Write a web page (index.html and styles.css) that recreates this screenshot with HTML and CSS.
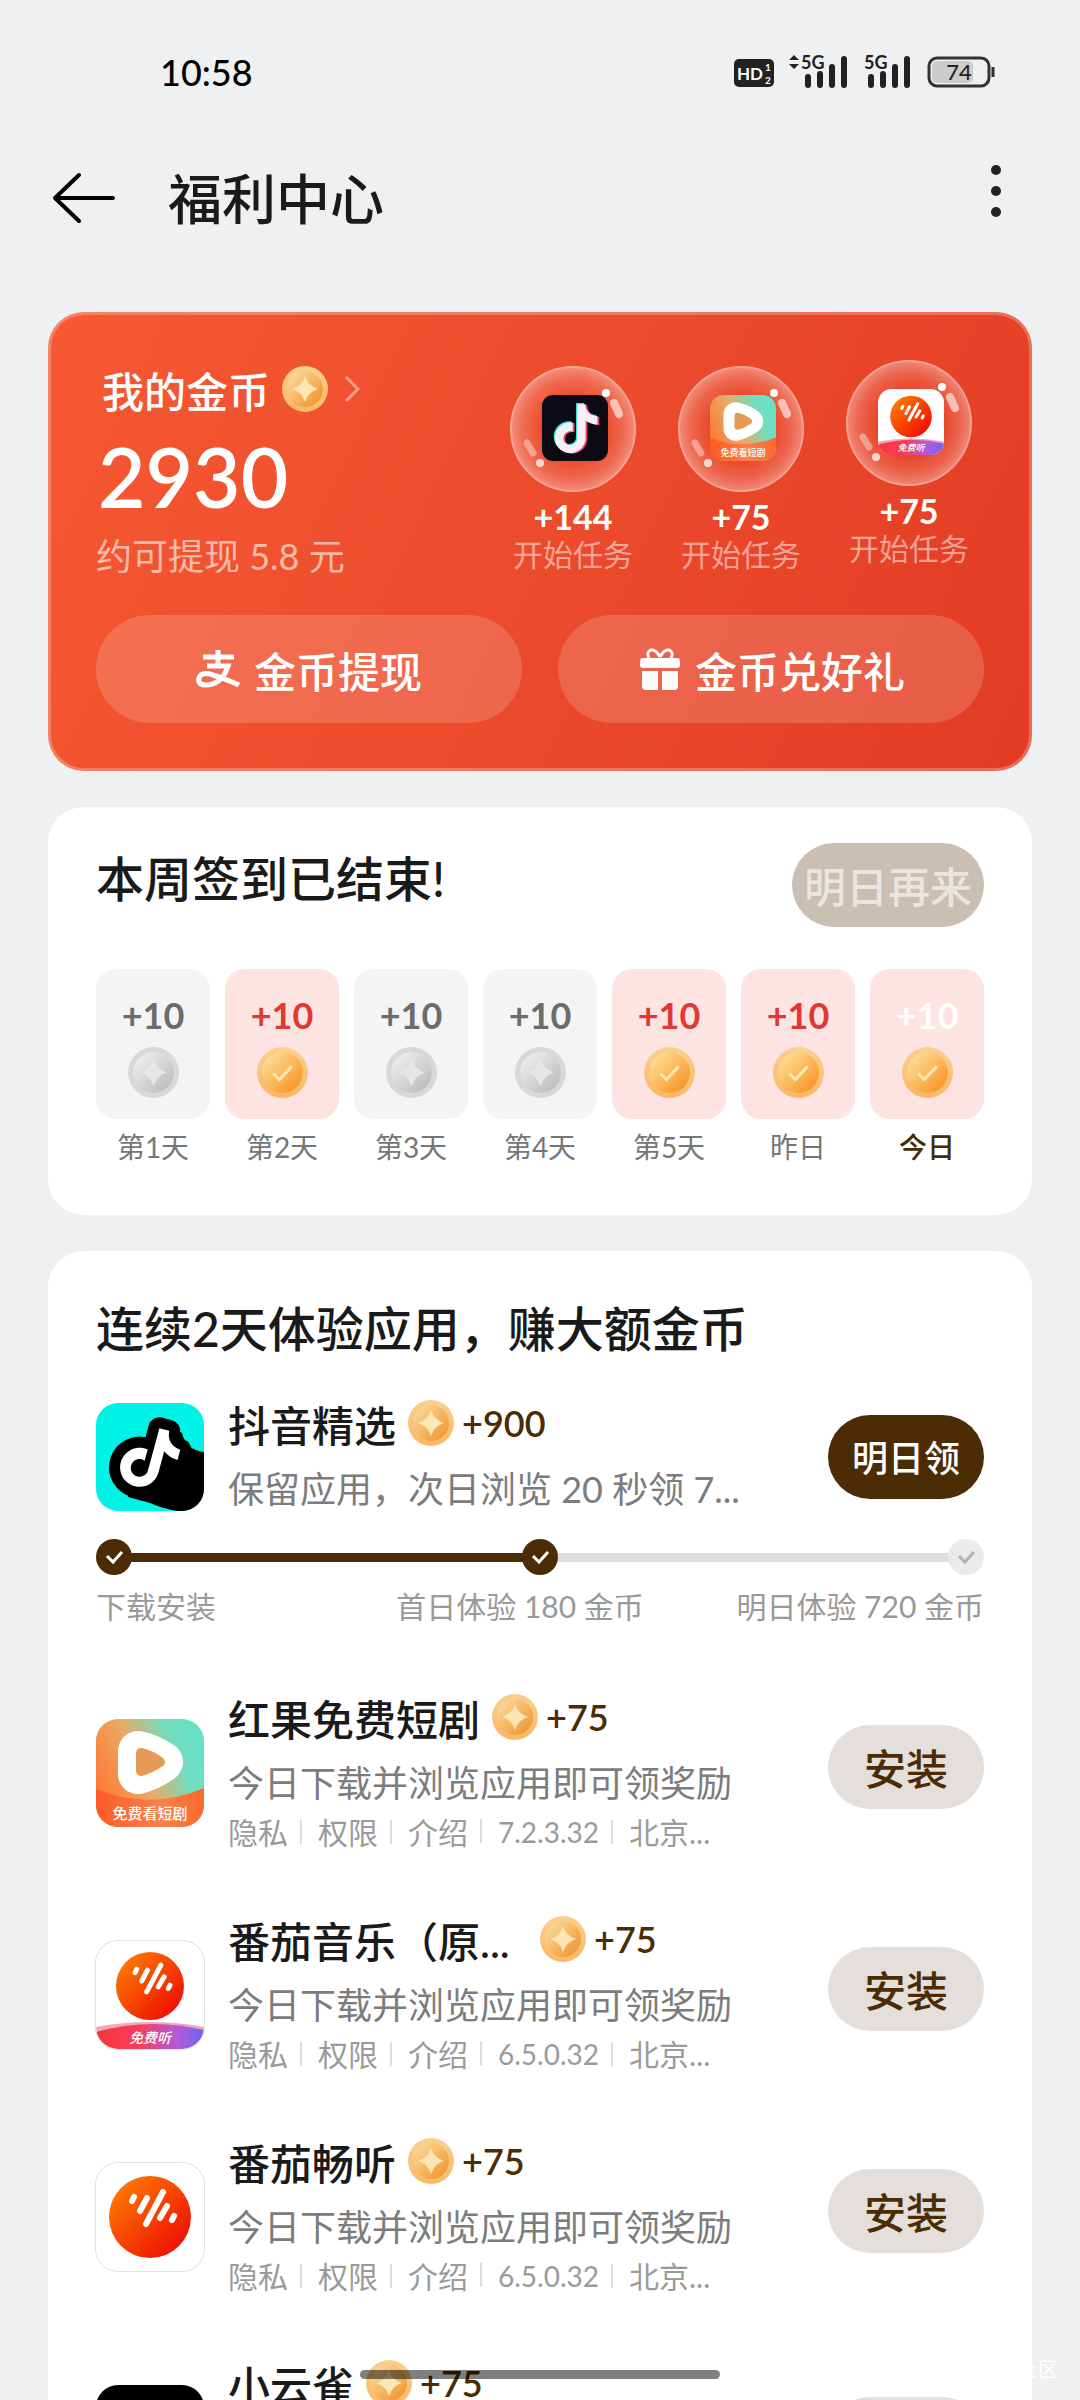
FILE: index.html
```html
<!DOCTYPE html>
<html lang="zh-CN">

<head>
  <meta charset="utf-8">
  <meta name="viewport" content="width=device-width, initial-scale=1.0" />
  <title>福利中心</title>
  <link rel="stylesheet" href="styles.css">
</head>

<body>
  <!-- shared icons -->
  <svg class="defs" width="0" height="0" aria-hidden="true">
    <defs>
      <linearGradient id="gold-rim" x1="0" y1="0" x2="0" y2="1">
        <stop offset="0" stop-color="#f9d08e" />
        <stop offset="1" stop-color="#fbb765" />
      </linearGradient>
      <linearGradient id="gold-face" x1="0" y1="0" x2="1" y2="1">
        <stop offset="0" stop-color="#fde0a6" />
        <stop offset="1" stop-color="#ee8e26" />
      </linearGradient>
      <linearGradient id="tick-face" x1="0" y1="0" x2="1" y2="1">
        <stop offset="0.1" stop-color="#ffdf98" />
        <stop offset="1" stop-color="#f68a17" />
      </linearGradient>
      <linearGradient id="silver-face" x1="0" y1="0" x2="1" y2="1">
        <stop offset="0.1" stop-color="#eeeff0" />
        <stop offset="1" stop-color="#b3b5b7" />
      </linearGradient>
      <linearGradient id="drama-bg" x1="0" y1="0.6" x2="0.9" y2="0.2">
        <stop offset="0" stop-color="#fd7a35" />
        <stop offset="0.45" stop-color="#e8ab68" />
        <stop offset="0.8" stop-color="#74dcbd" />
        <stop offset="1" stop-color="#68e0c6" />
      </linearGradient>
      <linearGradient id="drama-wave" x1="0" y1="0" x2="1" y2="0">
        <stop offset="0" stop-color="#fb5c25" />
        <stop offset="0.6" stop-color="#fb7f49" />
        <stop offset="1" stop-color="#fa6a2e" />
      </linearGradient>
      <linearGradient id="tomato" x1="0" y1="0" x2="1" y2="1">
        <stop offset="0.1" stop-color="#ff7a00" />
        <stop offset="0.9" stop-color="#ee0c04" />
      </linearGradient>
      <linearGradient id="tomato-wave" x1="0" y1="0" x2="1" y2="0">
        <stop offset="0" stop-color="#f8343c" />
        <stop offset="0.4" stop-color="#f2405e" />
        <stop offset="0.75" stop-color="#b45ad8" />
        <stop offset="1" stop-color="#6a66f4" />
      </linearGradient>
      <radialGradient id="bubble">
        <stop offset="0.5" stop-color="#fff" stop-opacity="0" />
        <stop offset="0.8" stop-color="#fff" stop-opacity="0.17" />
        <stop offset="0.98" stop-color="#fff" stop-opacity="0.36" />
        <stop offset="1" stop-color="#fff" stop-opacity="0.4" />
      </radialGradient>
      <clipPath id="app-clip">
        <rect width="108" height="108" rx="22" />
      </clipPath>
    </defs>

    <symbol id="coin" viewBox="0 0 46 46">
      <circle cx="23" cy="23" r="23" fill="url(#gold-rim)" />
      <circle cx="23" cy="23" r="18" fill="url(#gold-face)" />
      <path d="M23 10q3 10 13 13q-10 3-13 13q-3-10-13-13q10-3 13-13z" fill="#fee5b3" />
    </symbol>
    <symbol id="coin-silver" viewBox="0 0 50 50">
      <circle cx="25" cy="25" r="25" fill="#d6d8da" />
      <circle cx="25" cy="25" r="20" fill="url(#silver-face)" />
      <path d="M25 11q3 11 13 14q-10 3-13 14q-3-11-13-14q10-3 13-14z" fill="#e5e6e7" />
    </symbol>
    <symbol id="coin-tick" viewBox="0 0 50 50">
      <circle cx="25" cy="25" r="25" fill="url(#gold-rim)" />
      <circle cx="25" cy="25" r="20" fill="url(#tick-face)" />
      <path d="M16 26l6 6l12-13" fill="none" stroke="#ffe7b5" stroke-width="3" />
    </symbol>
    <symbol id="tick" viewBox="0 0 36 36">
      <path d="M11 17l6 6l9-10" fill="none" stroke="currentColor" stroke-width="3" />
    </symbol>
    <symbol id="note" class="note" viewBox="0 0 24 24">
      <path d="M12.525.02c1.31-.02 2.61-.01 3.91-.02.08 1.53.63 3.09 1.75 4.17 1.12 1.11 2.7 1.62 4.24 1.79v4.03c-1.44-.05-2.89-.35-4.2-.97-.57-.26-1.1-.59-1.62-.93-.01 2.92.01 5.84-.02 8.75-.08 1.4-.54 2.79-1.35 3.94-1.31 1.92-3.58 3.17-5.91 3.21-1.43.08-2.86-.31-4.08-1.03-2.02-1.19-3.44-3.37-3.65-5.71-.02-.5-.03-1-.01-1.49.18-1.9 1.12-3.72 2.58-4.96 1.66-1.44 3.98-2.13 6.15-1.72.02 1.48-.04 2.96-.04 4.44-.99-.32-2.15-.23-3.02.37-.63.41-1.11 1.04-1.36 1.75-.21.51-.15 1.07-.14 1.61.24 1.64 1.82 3.02 3.5 2.87 1.12-.01 2.19-.66 2.77-1.61.19-.33.4-.67.41-1.06.1-1.79.06-3.57.07-5.36.01-4.03-.01-8.05.02-12.07z" />
    </symbol>
    <symbol id="wave-bars" viewBox="0 0 108 108">
      <path d="M36 38l2-4M44 48l7-13M50 61l17-32M64 55l7-12M76 57l2-4" fill="none" stroke="#fff" stroke-width="6" stroke-linecap="round" />
    </symbol>

    <symbol id="app-tiktok" viewBox="0 0 108 108">
      <rect width="108" height="108" rx="18" fill="#0a0b15" />
      <use href="#note" x="14" y="13" width="80" height="80" fill="#3fe5e0" />
      <use href="#note" x="19" y="16" width="80" height="80" fill="#ee4565" />
      <use href="#note" x="16" y="15" width="80" height="80" fill="#f6eff8" />
    </symbol>
    <symbol id="app-douyin" viewBox="0 0 108 108">
      <g clip-path="url(#app-clip)">
        <rect width="108" height="108" fill="#00f3e6" />
        <path d="M70 20L86 30q4 17 22 19v59H82q-14-2-28-8L32 94L60 40z" />
        <g transform="translate(54 55) rotate(15) scale(2.6) translate(-12 -12)">
          <use href="#note" width="24" height="24" fill="#000" stroke="#000" stroke-width="8.5" stroke-linejoin="round" />
          <use href="#note" width="24" height="24" fill="#fff" />
        </g>
      </g>
    </symbol>
    <symbol id="app-drama" viewBox="0 0 108 108">
      <g clip-path="url(#app-clip)">
        <rect width="108" height="108" fill="url(#drama-bg)" />
        <path d="M0 70q54 22 108-1v39H0z" fill="url(#drama-wave)" />
        <path d="M42 32v23q12-3 25-12q-13-9-25-11z" fill="#fff" stroke="#fff" stroke-width="40" stroke-linejoin="round" />
        <path d="M45 34v18q9-2 19-9q-10-7-19-9z" fill="#e79a55" stroke="#e79a55" stroke-width="10" stroke-linejoin="round" />
      </g>
    </symbol>
    <symbol id="app-music" viewBox="0 0 108 108">
      <g clip-path="url(#app-clip)">
        <rect width="108" height="108" fill="#fff" />
        <path d="M0 86q54-10 108 0v22H0z" fill="#f7a6b6" />
        <path d="M0 91q54-15 108-2v19H0z" fill="url(#tomato-wave)" />
        <circle cx="54" cy="45" r="34" fill="url(#tomato)" />
        <use href="#wave-bars" x="9" y="0" width="90" height="90" />
      </g>
    </symbol>
    <symbol id="app-listen" viewBox="0 0 108 108">
      <rect width="108" height="108" rx="22" fill="#fff" />
      <circle cx="54" cy="54" r="41" fill="url(#tomato)" />
      <use href="#wave-bars" width="108" height="108" />
    </symbol>
    <symbol id="app-bird" viewBox="0 0 108 108">
      <rect width="108" height="108" rx="22" />
    </symbol>

    <symbol id="bubble-back" viewBox="0 0 126 126">
      <circle cx="63" cy="63" r="63" fill="url(#bubble)" />
      <circle cx="63" cy="63" r="62" fill="none" stroke="#fff" stroke-opacity="0.2" stroke-width="2" />
    </symbol>
    <symbol id="bubble-shine" viewBox="0 0 126 126">
      <circle cx="96" cy="27" r="4" fill="#fff" />
      <path d="M104 37l5 11" stroke="#fff" stroke-opacity="0.6" stroke-width="8" stroke-linecap="round" />
      <circle cx="30" cy="97" r="4" fill="#fff" fill-opacity="0.75" />
      <path d="M17 77l6 10" stroke="#fff" stroke-opacity="0.4" stroke-width="7" stroke-linecap="round" />
    </symbol>
  </svg>

  <div class="app">
    <div class="status-bar">
      <span class="time">10:58</span>
      <svg class="status-icons" width="264" height="36" viewBox="0 0 264 36" aria-hidden="true">
        <rect x="0" y="5" width="40" height="28" rx="5" fill="#222" />
        <text x="3" y="26" font-size="17" fill="#fff">HD</text>
        <text x="31" y="17" font-size="10" fill="#fff">1</text>
        <text x="31" y="30" font-size="10" fill="#fff">2</text>
        <path d="M55 6l5-5l5 5zM55 10l5 5l5-5z" fill="#222" />
        <text x="67" y="15" font-size="18" fill="#222">5G</text>
        <path d="M74 23v8M86 20v11M98 13v18M110 5v26" stroke="#222" stroke-width="6" stroke-linecap="round" />
        <text x="130" y="15" font-size="18" fill="#222">5G</text>
        <path d="M137 23v8M149 20v11M161 13v18M173 5v26" stroke="#222" stroke-width="6" stroke-linecap="round" />
        <rect x="195" y="4" width="60" height="28" rx="8" fill="none" stroke="#333" stroke-width="3" />
        <rect x="198" y="7" width="41" height="22" rx="5" fill="#ccc" />
        <path d="M259 13v10" stroke="#333" stroke-width="3" />
        <text class="battery" x="225" y="26" font-size="22" fill="#222">74</text>
      </svg>
    </div>

    <header>
      <button class="icon-btn" aria-label="返回">
        <svg width="64" height="54" viewBox="0 0 64 54">
          <path d="M4 27h58M28 4L4 27l24 23" fill="none" stroke="#000" stroke-width="4" stroke-linecap="round" stroke-linejoin="round" />
        </svg>
      </button>
      <h1>福利中心</h1>
      <button class="icon-btn" aria-label="更多">
        <svg width="12" height="68" viewBox="0 0 12 68">
          <circle cx="6" cy="6" r="5" fill="#222" />
          <circle cx="6" cy="27" r="5" fill="#222" />
          <circle cx="6" cy="48" r="5" fill="#222" />
        </svg>
      </button>
    </header>

    <main>
      <section class="wallet">
        <div class="wallet-top">
          <div class="balance">
            <a href="#" class="balance-link">我的金币
              <svg width="46" height="46"><use href="#coin" /></svg>
              <svg class="chevron" width="16" height="28" viewBox="0 0 16 28">
                <path d="M2 2l12 12L2 26" fill="none" stroke="#fff" stroke-opacity="0.45" stroke-width="3" />
              </svg>
            </a>
            <strong>2930</strong>
            <p>约可提现 5.8 元</p>
          </div>
          <div class="tasks">
            <a href="#" class="task">
              <svg width="126" height="126" viewBox="0 0 126 126">
                <use href="#bubble-back" />
                <use href="#app-tiktok" x="32" y="29" width="66" height="66" />
                <use href="#bubble-shine" />
              </svg>
              <b>+144</b>
              <span>开始任务</span>
            </a>
            <a href="#" class="task">
              <svg width="126" height="126" viewBox="0 0 126 126">
                <use href="#bubble-back" />
                <use href="#app-drama" x="32" y="29" width="66" height="66" />
                <text class="app-text" x="65" y="90" font-size="9">免费看短剧</text>
                <use href="#bubble-shine" />
              </svg>
              <b>+75</b>
              <span>开始任务</span>
            </a>
            <a href="#" class="task raised">
              <svg width="126" height="126" viewBox="0 0 126 126">
                <use href="#bubble-back" />
                <use href="#app-music" x="32" y="29" width="66" height="66" />
                <text class="app-text slant" x="65" y="91" font-size="9">免费听</text>
                <use href="#bubble-shine" />
              </svg>
              <b>+75</b>
              <span>开始任务</span>
            </a>
          </div>
        </div>
        <div class="wallet-actions">
          <button>
            <svg width="46" height="42" viewBox="0 0 46 42">
              <path d="M7 9h31M22 2v16M11 18h21Q26 37 9 37Q1 36 3 30Q5 24 14 26Q28 30 43 37" fill="none" stroke="#fff" stroke-width="5" />
            </svg>
            金币提现
          </button>
          <button>
            <svg width="46" height="42" viewBox="0 0 46 42">
              <path d="M23 9Q19 1 14 2Q9 4 12 10M23 9Q27 1 32 2Q37 4 34 10" fill="none" stroke="#fff" stroke-width="3" />
              <rect x="3" y="10" width="40" height="10" rx="3" fill="#fff" />
              <path d="M5 23h16v19H9q-4 0-4-4zM25 23h16v15q0 4-4 4H25z" fill="#fff" />
            </svg>
            金币兑好礼
          </button>
        </div>
      </section>

      <section class="card">
        <div class="signin-head">
          <h2>本周签到已结束!</h2>
          <button class="btn btn-done" disabled>明日再来</button>
        </div>
        <ul class="days">
          <li>
            <div class="day">+10<svg width="51" height="51"><use href="#coin-silver" /></svg></div>
            第1天
          </li>
          <li class="signed">
            <div class="day">+10<svg width="51" height="51"><use href="#coin-tick" /></svg></div>
            第2天
          </li>
          <li>
            <div class="day">+10<svg width="51" height="51"><use href="#coin-silver" /></svg></div>
            第3天
          </li>
          <li>
            <div class="day">+10<svg width="51" height="51"><use href="#coin-silver" /></svg></div>
            第4天
          </li>
          <li class="signed">
            <div class="day">+10<svg width="51" height="51"><use href="#coin-tick" /></svg></div>
            第5天
          </li>
          <li class="signed">
            <div class="day">+10<svg width="51" height="51"><use href="#coin-tick" /></svg></div>
            昨日
          </li>
          <li class="signed today">
            <div class="day">+10<svg width="51" height="51"><use href="#coin-tick" /></svg></div>
            今日
          </li>
        </ul>
      </section>

      <section class="card">
        <h2 class="list-title">连续2天体验应用，赚大额金币</h2>

        <article class="item">
          <svg width="108" height="108"><use href="#app-douyin" /></svg>
          <div class="info">
            <h3><span>抖音精选</span><svg width="46" height="46"><use href="#coin" /></svg><b>+900</b></h3>
            <p>保留应用，次日浏览 20 秒领 7...</p>
          </div>
          <button class="btn btn-dark">明日领</button>
        </article>
        <div class="progress">
          <svg class="dot" width="36" height="36"><use href="#tick" /></svg>
          <i class="line"></i>
          <svg class="dot" width="36" height="36"><use href="#tick" /></svg>
          <i class="line todo"></i>
          <svg class="dot todo" width="36" height="36"><use href="#tick" /></svg>
        </div>
        <div class="progress-text">
          <span>下载安装</span>
          <span class="middle">首日体验 180 金币</span>
          <span>明日体验 720 金币</span>
        </div>

        <article class="item">
          <svg width="108" height="108">
            <use href="#app-drama" />
            <text class="app-text" x="54" y="100" font-size="15">免费看短剧</text>
          </svg>
          <div class="info">
            <h3><span>红果免费短剧</span><svg width="46" height="46"><use href="#coin" /></svg><b>+75</b></h3>
            <p>今日下载并浏览应用即可领奖励</p>
            <div class="meta">
              <a href="#">隐私</a><a href="#">权限</a><a href="#">介绍</a><span class="version">7.2.3.32</span><span>北京...</span>
            </div>
          </div>
          <button class="btn btn-light">安装</button>
        </article>

        <article class="item">
          <svg class="bordered" width="108" height="108">
            <use href="#app-music" />
            <text class="app-text slant" x="54" y="102" font-size="14">免费听</text>
          </svg>
          <div class="info">
            <h3><span class="long">番茄音乐（原...</span><svg width="46" height="46"><use href="#coin" /></svg><b>+75</b></h3>
            <p>今日下载并浏览应用即可领奖励</p>
            <div class="meta">
              <a href="#">隐私</a><a href="#">权限</a><a href="#">介绍</a><span class="version">6.5.0.32</span><span>北京...</span>
            </div>
          </div>
          <button class="btn btn-light">安装</button>
        </article>

        <article class="item">
          <svg class="bordered" width="108" height="108"><use href="#app-listen" /></svg>
          <div class="info">
            <h3><span>番茄畅听</span><svg width="46" height="46"><use href="#coin" /></svg><b>+75</b></h3>
            <p>今日下载并浏览应用即可领奖励</p>
            <div class="meta">
              <a href="#">隐私</a><a href="#">权限</a><a href="#">介绍</a><span class="version">6.5.0.32</span><span>北京...</span>
            </div>
          </div>
          <button class="btn btn-light">安装</button>
        </article>

        <article class="item last">
          <svg width="108" height="108"><use href="#app-bird" /></svg>
          <div class="info">
            <h3><span>小云雀</span><svg width="46" height="46"><use href="#coin" /></svg><b>+75</b></h3>
          </div>
          <button class="btn btn-light" aria-label="安装"></button>
        </article>
      </section>
    </main>
  </div>

  <div class="watermark">社区</div>
  <div class="home-bar"></div>
</body>

</html>
```
FILE: styles.css
```css
* {
  box-sizing: border-box;
}

body {
  margin: 0;
  background-color: #eff0f2;
  color: #1a1a1a;
  font-family: Lato, "Noto Sans CJK SC", sans-serif;
}

h1, h2, h3, p, ul {
  margin: 0;
  padding: 0;
  font-weight: 500;
}

a {
  color: inherit;
  text-decoration: none;
}

button {
  border: none;
  padding: 0;
  font-family: inherit;
  font-weight: 500;
}

svg {
  display: block;
  flex: none;
}

.defs {
  position: absolute;
}

.note {
  overflow: visible;
}

.app-text {
  fill: white;
  font-weight: 500;
  text-anchor: middle;
}

.slant {
  font-style: italic;
}

.bordered {
  border-radius: 22px;
  box-shadow: 0 0 0 1px #e2e2e2;
}

.app {
  height: 100vh;
  display: flex;
  flex-direction: column;
}

/* top bars */
.status-bar {
  flex: none;
  height: 144px;
  padding: 0 82px 0 160px;
  display: flex;
  align-items: center;
  justify-content: space-between;
}

.time {
  font-size: 36px;
  font-weight: 500;
  color: #000;
}

.status-icons text {
  font-family: Lato, sans-serif;
  font-weight: 700;
}

.status-icons .battery {
  font-weight: 500;
  text-anchor: middle;
}

header {
  flex: none;
  height: 108px;
  padding: 0 78px 0 51px;
  display: flex;
  align-items: center;
}

header h1 {
  flex: 1;
  margin-left: 53px;
  padding-top: 4px;
  font-size: 54px;
  line-height: 72px;
}

.icon-btn {
  background: none;
}

main {
  flex: 1;
  min-height: 0;
  padding: 60px 48px 0;
  overflow-y: auto;
  scrollbar-width: none;
}

.card,
.wallet {
  margin-bottom: 36px;
  padding: 36px 48px 48px;
  border-radius: 36px;
  background-color: white;
}

/* coins */
.wallet {
  padding: 48px;
  color: white;
  background: linear-gradient(115deg, #f65932, #ec4b2c 50%, #e23c24);
  box-shadow: inset 0 0 0 3px rgba(255, 255, 255, 0.25);
}

.wallet-top {
  display: flex;
  justify-content: space-between;
  align-items: flex-start;
}

.balance {
  padding-top: 6px;
}

.balance-link {
  display: flex;
  align-items: center;
  height: 46px;
  padding-left: 6px;
  gap: 12px;
  font-size: 42px;
  font-weight: 500;
}

.chevron {
  margin-left: 4px;
}

.balance strong {
  display: block;
  margin-top: 18px;
  padding-left: 2px;
  font-size: 82px;
  line-height: 92px;
  font-weight: 600;
}

.balance p {
  margin-top: 10px;
  font-size: 36px;
  line-height: 48px;
  font-weight: 400;
  color: rgba(255, 255, 255, 0.6);
}

.tasks {
  display: flex;
  gap: 42px;
  margin-right: 12px;
}

.task {
  margin-top: 6px;
  display: flex;
  flex-direction: column;
  align-items: center;
}

.task.raised {
  margin-top: 0;
}

.task b {
  margin-top: 6px;
  font-size: 34px;
  line-height: 38px;
  font-weight: 700;
}

.task span {
  font-size: 30px;
  line-height: 36px;
  color: rgba(255, 255, 255, 0.5);
}

.wallet-actions {
  display: grid;
  grid-template-columns: 1fr 1fr;
  gap: 36px;
  margin-top: 35px;
}

.wallet-actions button {
  height: 108px;
  display: flex;
  align-items: center;
  justify-content: center;
  gap: 12px;
  border-radius: 54px;
  background-color: rgba(255, 255, 255, 0.16);
  color: white;
  font-size: 42px;
}

/* sign in */
.signin-head {
  display: flex;
  justify-content: space-between;
}

h2 {
  font-size: 48px;
  line-height: 72px;
}

.btn {
  flex: none;
  width: 156px;
  height: 84px;
  padding-bottom: 2px;
  border-radius: 42px;
  font-size: 42px;
}

.btn-done {
  width: 192px;
  background-color: #c9bfb2;
  color: #e9e5e0;
}

.btn-dark {
  background-color: #4b2c05;
  color: white;
  font-size: 36px;
}

.btn-light {
  background-color: #e4dfda;
  color: #4b2c05;
}

.days {
  display: grid;
  grid-template-columns: repeat(7, 1fr);
  gap: 15px;
  margin-top: 42px;
  list-style: none;
}

.days li {
  text-align: center;
  font-size: 28px;
  line-height: 40px;
  font-weight: 400;
  color: #767676;
}

.day {
  height: 150px;
  margin-bottom: 8px;
  padding-top: 26px;
  display: flex;
  flex-direction: column;
  align-items: center;
  gap: 12px;
  border-radius: 20px;
  background-color: #f4f4f4;
  color: #6c6c6c;
  font-size: 36px;
  font-weight: 700;
}

.signed .day {
  background-color: #fde4e2;
  color: #dc3a33;
}

.days .today {
  color: #432a08;
  font-weight: 500;
}

.today .day {
  color: white;
}

/* app list */
.list-title {
  line-height: 84px;
  margin-bottom: 29px;
}

.item {
  display: flex;
  align-items: center;
  gap: 24px;
  margin-bottom: 64px;
}

.item:first-of-type {
  margin-bottom: 26px;
}

.item .btn {
  margin-bottom: 12px;
}

.item:first-of-type .btn,
.item.last .btn {
  margin-bottom: 0;
}

.item.last {
  height: 158px;
}

.item.last .info {
  align-self: flex-start;
}

.info {
  flex: 1;
  min-width: 0;
}

.info h3 {
  display: flex;
  align-items: center;
  height: 46px;
  font-size: 42px;
}

.info h3 svg {
  margin: 0 8px 0 12px;
}

.info h3 b {
  font-size: 36px;
  font-weight: 600;
  color: #4b2c05;
}

.long {
  width: 300px;
}

.info p {
  margin-top: 19px;
  font-size: 36px;
  line-height: 48px;
  font-weight: 400;
  color: #7c7c7c;
  white-space: nowrap;
}

.meta {
  display: flex;
  align-items: center;
  margin-top: 5px;
  font-size: 30px;
  line-height: 40px;
  color: #9a9a9a;
}

.meta > * + *::before {
  content: "";
  display: inline-block;
  width: 2px;
  height: 24px;
  margin: 0 16px 0 12px;
  background-color: #dedede;
}

.version {
  font-size: 28px;
}

.progress {
  display: flex;
  align-items: center;
}

.dot {
  position: relative;
  border-radius: 50%;
  background-color: #4b2c05;
  color: white;
}

.dot.todo {
  background-color: #ebebeb;
  color: #b0b0b0;
}

.line {
  flex: 1;
  height: 9px;
  margin: 0 -2px;
  background-color: #4b2c05;
}

.line.todo {
  background-color: #dedede;
}

.progress-text {
  display: grid;
  grid-template-columns: 1fr auto 1fr;
  margin: 9px 0 66px;
  font-size: 30px;
  line-height: 44px;
  color: #999;
}

.progress-text .middle {
  padding-right: 40px;
}

.progress-text span:last-child {
  text-align: right;
}

/* overlays */
.watermark {
  position: fixed;
  right: 22px;
  bottom: 21px;
  font-size: 20px;
  line-height: 20px;
  color: white;
}

.home-bar {
  position: fixed;
  left: 50%;
  bottom: 21px;
  width: 360px;
  height: 9px;
  margin-left: -180px;
  border-radius: 5px;
  background-color: rgba(0, 0, 0, 0.5);
}
```
